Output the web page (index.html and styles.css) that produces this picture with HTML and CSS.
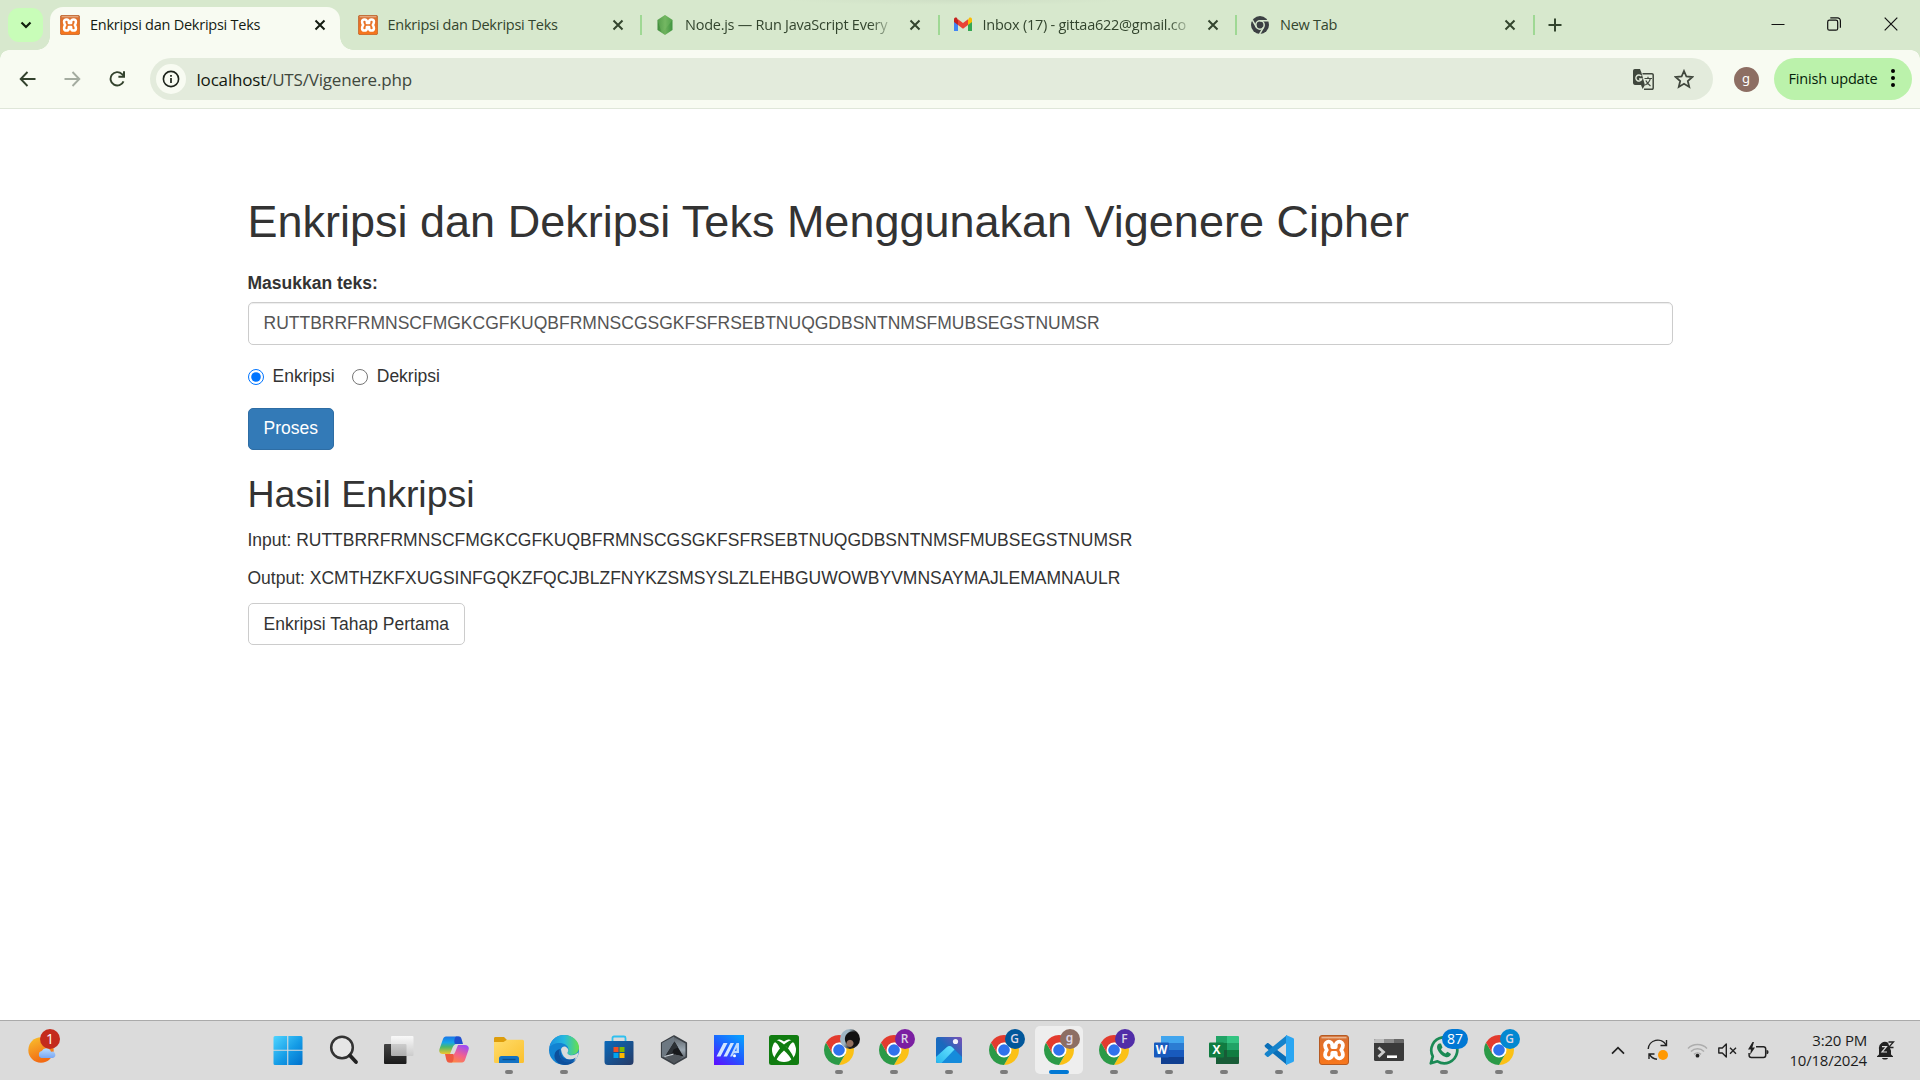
FILE: index.html
```html
<!DOCTYPE html>
<html lang="id">
<head>
<meta charset="utf-8">
<title>Enkripsi dan Dekripsi Teks</title>
<link rel="stylesheet" href="styles.css">
</head>
<body>
<svg class="defs" width="0" height="0" aria-hidden="true">
  <defs>
    <linearGradient id="gOrange" x1="0" y1="0" x2="0" y2="1"><stop offset="0" stop-color="#d0703a"/><stop offset=".25" stop-color="#e2702a"/><stop offset="1" stop-color="#f8771c"/></linearGradient>
    <linearGradient id="gWin" x1="0" y1="0" x2="1" y2="1"><stop offset="0" stop-color="#4fd5ff"/><stop offset=".55" stop-color="#149be6"/><stop offset="1" stop-color="#0070cc"/></linearGradient>
    <linearGradient id="gSun" x1="0" y1="0" x2=".4" y2="1"><stop offset="0" stop-color="#f9c22e"/><stop offset="1" stop-color="#f26a13"/></linearGradient>
    <linearGradient id="gCloud" x1="0" y1="0" x2="0" y2="1"><stop offset="0" stop-color="#b9dcff"/><stop offset="1" stop-color="#7aa7f3"/></linearGradient>
    <linearGradient id="gDark" x1="0" y1="0" x2="0" y2="1"><stop offset="0" stop-color="#444"/><stop offset="1" stop-color="#1b1b1b"/></linearGradient>
    <linearGradient id="gLight" x1="0" y1="0" x2="0" y2="1"><stop offset="0" stop-color="#fff"/><stop offset="1" stop-color="#c8c8c8"/></linearGradient>
    <linearGradient id="gCopA" x1="0" y1="0" x2="0" y2="1"><stop offset="0" stop-color="#1976e8"/><stop offset=".35" stop-color="#16a5e8"/><stop offset=".6" stop-color="#4cb86a"/><stop offset="1" stop-color="#f2c52e"/></linearGradient>
    <linearGradient id="gCopB" x1=".7" y1="0" x2=".2" y2="1"><stop offset="0" stop-color="#a04bf2"/><stop offset=".5" stop-color="#f2608f"/><stop offset="1" stop-color="#ff8a3c"/></linearGradient>
    <linearGradient id="gFolder" x1="0" y1="0" x2="1" y2="1"><stop offset="0" stop-color="#ffdc6b"/><stop offset="1" stop-color="#fbc02d"/></linearGradient>
    <linearGradient id="gEdge" x1="0" y1=".3" x2="1" y2=".3"><stop offset="0" stop-color="#1b8fe0"/><stop offset=".5" stop-color="#25b9df"/><stop offset="1" stop-color="#66e04c"/></linearGradient>
    <linearGradient id="gStore" x1="0" y1="0" x2="1" y2="1"><stop offset="0" stop-color="#0a6abb"/><stop offset="1" stop-color="#263a66"/></linearGradient>
    <linearGradient id="gHex" x1="0" y1="0" x2="0" y2="1"><stop offset="0" stop-color="#596067"/><stop offset=".5" stop-color="#9aa6b0"/><stop offset="1" stop-color="#3a3e43"/></linearGradient>
    <linearGradient id="gAsus" x1=".1" y1="1" x2=".8" y2="0"><stop offset="0" stop-color="#5b10ff"/><stop offset=".5" stop-color="#1f5bff"/><stop offset="1" stop-color="#0a9cff"/></linearGradient>
    <linearGradient id="gPhoto" x1="0" y1="1" x2="1" y2="0"><stop offset="0" stop-color="#0d72c9"/><stop offset=".5" stop-color="#1b69bd"/><stop offset="1" stop-color="#7b4fb5"/></linearGradient>
    <linearGradient id="gHill" x1="0" y1="1" x2="1" y2="0"><stop offset="0" stop-color="#26b6ee"/><stop offset="1" stop-color="#6be4ff"/></linearGradient>
    <linearGradient id="gNode" x1="0" y1="0" x2="1" y2="0"><stop offset="0" stop-color="#3f8b3c"/><stop offset=".5" stop-color="#6fb35e"/><stop offset="1" stop-color="#3f9440"/></linearGradient>

    <symbol id="xampp" viewBox="0 0 30 30">
      <rect x=".5" y=".5" width="29" height="29" rx="2.500" fill="url(#gOrange)" stroke="#b65a22"/>
      <path d="M2.500 2.600h25" stroke="#e8b48e" stroke-width="1.600"/>
      <path d="M13.300 12V10.300a3.600 3.600 0 0 0-7.200 0c0 2 .6 3.200 1.700 4.700-1.100 1.500-1.700 2.700-1.700 4.700a3.600 3.600 0 0 0 7.200 0V18h3.400v1.700a3.600 3.600 0 0 0 7.200 0c0-2-.6-3.200-1.700-4.700 1.100-1.500 1.700-2.700 1.700-4.700a3.600 3.600 0 0 0-7.200 0V12z" fill="none" stroke="#fff" stroke-width="3.800" stroke-linejoin="round"/>
    </symbol>
    <symbol id="chrome" viewBox="0 0 48 48">
      <path d="M34.390 30 24 48A24 24 0 0 0 44.780 12H24z" fill="#fbc116"/>
      <path d="M13.610 30 3.220 12A24 24 0 0 0 24 48l10.390-18z" fill="#2b9a47"/>
      <path d="M24 12h20.780A24 24 0 0 0 3.220 12l10.390 18z" fill="#e33b2e"/>
      <circle cx="24" cy="24" r="12" fill="#fff"/><circle cx="24" cy="24" r="9.300" fill="#2f72ec"/>
    </symbol>
    <symbol id="close" viewBox="0 0 12 12"><path d="M1.500 1.500l9 9M10.500 1.500l-9 9" stroke="currentColor" stroke-width="2" fill="none"/></symbol>
  </defs>
</svg>

<header class="browser">
  <div class="strip">
    <button class="tab-search"><svg width="12" height="8" viewBox="0 0 12 8"><path d="M1.500 1.500L6 6l4.500-4.500" fill="none" stroke="#10200d" stroke-width="2.200"/></svg></button>
    <div class="tab active"><svg class="fav"><use href="#xampp"/></svg><span class="title">Enkripsi dan Dekripsi Teks</span><svg class="x"><use href="#close"/></svg></div>
    <div class="tab"><svg class="fav"><use href="#xampp"/></svg><span class="title">Enkripsi dan Dekripsi Teks</span><svg class="x"><use href="#close"/></svg></div>
    <div class="tab sep"><svg class="fav" viewBox="0 0 20 20"><path d="M10 0l7.500 5v10L10 20l-7.500-5V5z" fill="url(#gNode)"/><path d="M10 0l7.500 5L7 18.300 2.500 5z" fill="#7fc06a" opacity=".35"/></svg><span class="title fade">Node.js — Run JavaScript Every</span><svg class="x"><use href="#close"/></svg></div>
    <div class="tab sep"><svg class="fav" viewBox="0 0 20 20"><path d="M1 4.500v11.400h4V8z" fill="#4285f4"/><path d="M19 4.500v11.400h-4V8z" fill="#34a853"/><path d="M15 5v5l4-3V4.500c0-2-2-2.300-3-1.500z" fill="#fbbc04"/><path d="M5 5v5L1 7V4.500c0-2 2-2.300 3-1.500z" fill="#c5221f"/><path d="M5 4.200l5 3.700 5-3.700V10l-5 3.700L5 10z" fill="#ea4335"/></svg><span class="title fade">Inbox (17) - gittaa622@gmail.co</span><svg class="x"><use href="#close"/></svg></div>
    <div class="tab sep"><svg class="fav" viewBox="0 0 20 20"><circle cx="10" cy="10" r="9" fill="#3c4043"/><circle cx="10" cy="10" r="4.200" fill="none" stroke="#d7e8cd" stroke-width="1.500"/><path d="M10 5.800h8M6.400 12.100l-4-7M13.600 12.100l-4 7" stroke="#d7e8cd" stroke-width="1.500"/></svg><span class="title">New Tab</span><svg class="x"><use href="#close"/></svg></div>
    <div class="plus"><svg width="14" height="14" viewBox="0 0 14 14"><path d="M7 .5v13M.5 7h13" stroke="#33452e" stroke-width="2"/></svg></div>
    <div class="window">
      <svg width="14" height="14" viewBox="0 0 14 14"><path d="M.5 7.500h13" stroke="#111" stroke-width="1"/></svg>
      <svg width="14" height="14" viewBox="0 0 14 14"><rect x=".7" y="3.200" width="10" height="10" rx="1.800" fill="none" stroke="#111" stroke-width="1.200"/><path d="M3.300 .9h7.200a2.900 2.900 0 0 1 2.900 2.900v7" fill="none" stroke="#111" stroke-width="1.200"/></svg>
      <svg width="14" height="14" viewBox="0 0 14 14"><path d="M.7.700l12.600 12.600M13.300.700L.7 13.300" stroke="#111" stroke-width="1.200"/></svg>
    </div>
  </div>
  <div class="toolbar">
    <div class="nav">
      <svg width="17" height="16" viewBox="0 0 17 16"><path d="M16.500 8H2M8.500 1L1.700 8l6.800 7" fill="none" stroke="#33422d" stroke-width="1.900"/></svg>
      <svg width="17" height="16" viewBox="0 0 17 16"><path d="M.5 8H15M8.500 1l6.800 7-6.800 7" fill="none" stroke="#a4aca0" stroke-width="1.900"/></svg>
      <svg width="17" height="16" viewBox="0 0 17 16"><path d="M14.500 10.300A6.700 6.700 0 1 1 13 3.100l2 2" fill="none" stroke="#33422d" stroke-width="1.900"/><path d="M16 .2v6.600H9.400V4.800H14V.2z" fill="#33422d"/></svg>
    </div>
    <div class="omnibox">
      <div class="info"><svg width="18" height="18" viewBox="0 0 18 18"><circle cx="9" cy="9" r="7.600" fill="none" stroke="#1d241b" stroke-width="1.600"/><path d="M9 8v5M9 5v1.700" stroke="#1d241b" stroke-width="1.700"/></svg></div>
      <span class="url"><b>localhost</b>/UTS/Vigenere.php</span>
      <svg class="translate" width="21" height="21" viewBox="0 0 21 21"><path d="M9.500 4.800H19a1.200 1.200 0 0 1 1.200 1.200v13a1.200 1.200 0 0 1-1.200 1.200h-8" fill="none" stroke="#40473d" stroke-width="1.500"/><path d="M1.800 0H7l1.400 3.600 3.500 12.300H1.800A1.800 1.800 0 0 1 0 14.100V1.800A1.800 1.800 0 0 1 1.800 0zM8 15.900h4L9.600 20z" fill="#40473d"/><path d="M8.300 7.200A3 3 0 1 0 8.700 10H6" fill="none" stroke="#e3ebdc" stroke-width="1.400"/><path d="M11.500 9.500h7.500M15 7.800v1.700M17.300 9.500c-.5 3-2.500 5-5 6.500M12.800 11.500c1 2 2.700 4 4.700 5.500" fill="none" stroke="#40473d" stroke-width="1.200"/></svg>
      <svg class="star" width="20" height="20" viewBox="0 0 20 20"><path d="M10 2l2.400 5.500 6 .5-4.600 4 1.400 5.900L10 14.800l-5.200 3.100L6.200 12 1.600 8l6-.5z" fill="none" stroke="#40473d" stroke-width="1.800"/></svg>
    </div>
    <div class="profile">g</div>
    <button class="update"><span>Finish update</span><svg width="4" height="18" viewBox="0 0 4 18"><circle cx="2" cy="2" r="2"/><circle cx="2" cy="9" r="2"/><circle cx="2" cy="16" r="2"/></svg></button>
  </div>
</header>

<main class="page">
  <h1>Enkripsi dan Dekripsi Teks Menggunakan Vigenere Cipher</h1>
  <label class="field-label" for="teks">Masukkan teks:</label>
  <input class="field" id="teks" type="text" value="RUTTBRRFRMNSCFMGKCGFKUQBFRMNSCGSGKFSFRSEBTNUQGDBSNTNMSFMUBSEGSTNUMSR">
  <div class="radios">
    <label><input type="radio" name="mode" checked>Enkripsi</label>
    <label><input type="radio" name="mode">Dekripsi</label>
  </div>
  <button class="btn primary">Proses</button>
  <h2>Hasil Enkripsi</h2>
  <p>Input: RUTTBRRFRMNSCFMGKCGFKUQBFRMNSCGSGKFSFRSEBTNUQGDBSNTNMSFMUBSEGSTNUMSR</p>
  <p>Output: XCMTHZKFXUGSINFGQKZFQCJBLZFNYKZSMSYSLZLEHBGUWOWBYVMNSAYMAJLEMAMNAULR</p>
  <button class="btn">Enkripsi Tahap Pertama</button>
</main>

<footer class="taskbar">
  <div class="widget">
    <svg width="30" height="30" viewBox="0 0 30 30"><circle cx="14" cy="15" r="12.700" fill="url(#gSun)"/><path d="M14.500 23a3.600 3.600 0 0 1 .3-7 5 5 0 0 1 9.200.7 3.300 3.300 0 0 1 2 6.300z" fill="url(#gCloud)"/></svg>
    <span class="badge red">1</span>
  </div>
  <div class="apps">
    <div class="app start"><svg viewBox="0 0 30 30"><path d="M.5 2.500a1.500 1.500 0 0 1 1.500-1.500h12.200v13.700H.5zM15.300 1H28a1.500 1.500 0 0 1 1.500 1.500v12.200H15.300zM.5 15.800h13.700V30H2a1.500 1.500 0 0 1-1.500-1.500zM15.300 15.800h14.200v12.700A1.500 1.500 0 0 1 28 30H15.300z" fill="url(#gWin)"/></svg></div>
    <div class="app"><svg viewBox="0 0 30 30"><circle cx="13" cy="12.500" r="10.800" fill="#e6e6e6" stroke="#333" stroke-width="2.500"/><path d="M21 20.500l6 6.500" stroke="#222" stroke-width="3.800" stroke-linecap="round"/></svg></div>
    <div class="app"><svg viewBox="0 0 30 30"><rect x="0" y="9" width="22.500" height="20" rx="1" fill="url(#gDark)"/><rect x="7" y="1" width="22.500" height="20" rx="1" fill="url(#gLight)" opacity=".83"/></svg></div>
    <div class="app"><svg viewBox="0 0 30 30"><path d="M7 1.500h12c2 0 3 1.500 2.500 3L20 9h-2c-3 0-4 2-5 5l-2 5H4c-3 0-4.500-2-3.500-5L4 4c.500-1.500 1.500-2.500 3-2.500z" fill="url(#gCopA)"/><path d="M17 1.500h3c2 0 2.500 2 3 4l1 3.500h-8c-1-1-1-6 1-7.500z" fill="#1f4fd0"/><path d="M23 27.500H11c-2 0-3-1.500-2.500-3l1.500-4.500h2c3 0 4-2 5-5l2-5h7c3 0 4.500 2 3.500 5L26 25c-.5 1.500-1.500 2.500-3 2.500z" fill="url(#gCopB)"/><path d="M13 27.500h-3c-2 0-2.500-2-3-4L6 19h8c1 1 1 7-1 8.500z" fill="#ee5a40"/></svg></div>
    <div class="app run"><svg viewBox="0 0 30 30"><path d="M0 6V3.500C0 2.500.5 2 1.500 2H10l3 3v3H0z" fill="#dd9d0c"/><path d="M0 7h9.500L13 4.800h15.500A1.500 1.500 0 0 1 30 6.300v20.200a1.500 1.500 0 0 1-1.500 1.500h-27A1.500 1.500 0 0 1 0 26.500z" fill="url(#gFolder)"/><path d="M5 28v-4.500A2.500 2.500 0 0 1 7.500 21h15a2.500 2.500 0 0 1 2.500 2.500V28z" fill="#1272c4"/><path d="M8.500 24.500h13" stroke="#0b4f8f" stroke-width="1.300"/></svg></div>
    <div class="app run"><svg viewBox="0 0 30 30"><circle cx="15" cy="15" r="15" fill="#1283d2"/><path d="M.5 12.500C1.500 5 7.500 0 15 0c8.500 0 15 6 15 12.500 0 5-4 7.500-8 7.500-3 0-4.500-1-4-2 1-1 1.500-2 1.500-3.500C19.500 10.500 15 8 10.500 8 6 8 2 10 .5 12.500z" fill="url(#gEdge)"/><path d="M11 14c-2 6 1 13 9 13 3 0 5-.7 7-2-3.500 4-8 5.500-13 4.800C8 28.800 5 24.500 5.500 20 5.800 17 8 14.500 11 14z" fill="#0c4f9c"/><path d="M12 14.500c.5-2.500 3-3.500 5-2.500s3 3 1.800 5c-1.300 1.700 1 3.500 4.200 3.200 2.500-.2 5-1.500 6.500-3-.5 3.500-1.500 6-3 7-3 2-13 1.500-14.500-9.700z" fill="#dbdbdb"/><path d="M12 14c-1.500 6 2.500 10.500 8 10.500 3 0 5.500-1 6.800-2-2 5-8 6-11.800 4-4-2-5.500-8-3-12.500z" fill="#0f58a8"/></svg></div>
    <div class="app"><svg viewBox="0 0 30 30"><path d="M8.500 7V3A1.500 1.500 0 0 1 10 1.500h10A1.500 1.500 0 0 1 21.500 3v4" fill="none" stroke="#2fc0ef" stroke-width="1.800"/><path d="M.5 7a1 1 0 0 1 1-1h27a1 1 0 0 1 1 1v19.500a3.500 3.500 0 0 1-3.500 3.500H4A3.500 3.500 0 0 1 .5 26.500z" fill="url(#gStore)"/><path d="M9.500 12h5v5h-5z" fill="#f25022"/><path d="M15.500 12h5v5h-5z" fill="#7fba00"/><path d="M9.500 18h5v5h-5z" fill="#00a4ef"/><path d="M15.500 18h5v5h-5z" fill="#ffb900"/></svg></div>
    <div class="app"><svg viewBox="0 0 30 30"><path d="M15 1l12.300 7v14L15 29 2.700 22V8z" fill="url(#gHex)" stroke="#3b4046" stroke-width="1.600" stroke-linejoin="round"/><path d="M15 1.500V7L6.500 21.500 3 22V8z" fill="#6d7882"/><path d="M15.500 6.500l9 15-8.500-1.800-10 2z" fill="#17191c"/><path d="M15.500 6.500l3.500 6-4.500 2-1.500 4-7 3z" fill="#2c3136"/><path d="M6 21.500l10-2 8 2L15 28.500z" fill="#50565c"/><path d="M5.500 21.500l9-2.300" stroke="#ccd3d9" stroke-width="1.200"/></svg></div>
    <div class="app"><svg viewBox="0 0 30 30"><path d="M0 0h30v30H0z" fill="url(#gAsus)"/><path d="M2.500 21.500L9.500 8h4l-7 13.500zM9.500 21.500l7-13.500h3.500l-7 13.500z" fill="#d2e6ff"/><path d="M16 21.500L22.500 8H25v10h-2.500v-5.500l-1.600 3.500h1.600v2.200h-2.700l-1.500 3.300z" fill="#bcd9ff"/><circle cx="20.500" cy="20.700" r="1.500" fill="#fff"/></svg></div>
    <div class="app"><svg viewBox="0 0 30 30"><rect width="30" height="30" rx="2.500" fill="#107c10"/><circle cx="15" cy="15" r="12" fill="#fff"/><path d="M7 4.500c3-1 6 .5 8 2 2-1.500 5-3 8-2-2-2-5-2.800-8-2.800S9 2.500 7 4.500zM4.500 25.500c1-5 5.500-12 10.500-16 5 4 9.500 11 10.500 16l-2 1.500c-1.500-4.500-5-8.500-8.500-11.500-3.500 3-7 7-8.500 11.500zM7 5c3.500.5 6 3 8 4.500-2 2-3 3-4 4C9.500 10.500 8 7.500 5 7zM23 5c-3.500.5-6 3-8 4.500 2 2 3 3 4 4 1.500-3 3-6 6-6.500z" fill="#107c10"/></svg></div>
    <div class="app run"><svg><use href="#chrome"/></svg><span class="badge astro"></span></div>
    <div class="app run"><svg><use href="#chrome"/></svg><span class="badge purple">R</span></div>
    <div class="app run"><svg viewBox="0 0 30 30"><rect x="2" y="2" width="26" height="26" rx="1.800" fill="url(#gPhoto)"/><path d="M2 22L13 12c1.500-1.300 3.500-1.300 5 0l10 10v4a2 2 0 0 1-2 2H4a2 2 0 0 1-2-2z" fill="#158bdb"/><path d="M2 22L13 12c1.500-1.300 3.500-1.300 5 0l2.500 2.500L7.500 28H4a2 2 0 0 1-2-2z" fill="url(#gHill)"/><circle cx="21.500" cy="6.500" r="2.600" fill="#f2f2fa"/></svg></div>
    <div class="app run"><svg><use href="#chrome"/></svg><span class="badge navy">G</span></div>
    <div class="app run current"><svg><use href="#chrome"/></svg><span class="badge brown">g</span></div>
    <div class="app run"><svg><use href="#chrome"/></svg><span class="badge violet">F</span></div>
    <div class="app run"><svg viewBox="0 0 30 30"><path d="M7 1h22a1 1 0 0 1 1 1v6H7z" fill="#41a5ee"/><path d="M7 8h23v7H7z" fill="#2b7cd3"/><path d="M7 15h23v7H7z" fill="#185abd"/><path d="M7 22h23v6a1 1 0 0 1-1 1H7z" fill="#103f91"/><rect y="7.500" width="15" height="15" rx="1" fill="#185abd"/><text x="7.500" y="19" text-anchor="middle" class="glyph">W</text></svg></div>
    <div class="app run"><svg viewBox="0 0 30 30"><path d="M7 1h11v7H7z" fill="#21a366"/><path d="M18 1h11a1 1 0 0 1 1 1v6H18z" fill="#33c481"/><path d="M7 8h11v7H7z" fill="#107c41"/><path d="M18 8h12v7H18z" fill="#21a366"/><path d="M7 15h11v7H7z" fill="#185c37"/><path d="M18 15h12v7H18z" fill="#107c41"/><path d="M7 22h23v6a1 1 0 0 1-1 1H7z" fill="#185c37"/><rect y="7.500" width="15" height="15" rx="1" fill="#107c41"/><text x="7.500" y="19" text-anchor="middle" class="glyph">X</text></svg></div>
    <div class="app run"><svg viewBox="0 0 30 30"><path d="M.5 10.500L3 8.300c.5-.4 1-.4 1.500 0L23 22.500V30L1 11.900z" fill="#0a6fb8"/><path d="M.5 19.500L3 21.700c.5.400 1 .4 1.500 0L23 7.500V0L1 18.100z" fill="#1583cb"/><path d="M22 0l7 3c.7.300 1 .8 1 1.500v21c0 .7-.3 1.200-1 1.500l-7 3z" fill="#2aa6f2"/></svg></div>
    <div class="app run"><svg><use href="#xampp"/></svg></div>
    <div class="app run"><svg viewBox="0 0 30 30"><rect y="4" width="30" height="22" rx="1.500" fill="#3a3a3a"/><path d="M1.500 4H10v4H0V5.500A1.500 1.500 0 0 1 1.500 4z" fill="#bdbdbd"/><path d="M10 4h10v4H10z" fill="#8d8d8d"/><path d="M20 4h8.500A1.500 1.500 0 0 1 30 5.500V8H20z" fill="#666"/><path d="M4.500 12.500L9.500 17l-5 4.700" fill="none" stroke="#ccc" stroke-width="2.800"/><path d="M13 21.700h10" stroke="#fff" stroke-width="2.600"/></svg></div>
    <div class="app run"><svg viewBox="0 0 30 30"><path d="M1.800 28.300l2-7A13 13 0 1 1 8.500 26.300z" fill="#e0e0e0" stroke="#1b8a55" stroke-width="2.700" stroke-linejoin="round"/><path d="M10 8.500c-2 1-2.500 3.500-1.500 6 1.500 3.500 4.500 6.500 8 7.500 2.500.7 5-.5 5.500-3l-3.500-2.200-2 1.700c-2-.8-3.500-2.300-4.500-4.300l1.500-1.700L12 8.500z" fill="#1b8a55"/></svg><span class="badge count">87</span></div>
    <div class="app run"><svg><use href="#chrome"/></svg><span class="badge sky">G</span></div>
  </div>
  <div class="tray">
    <svg class="chev" width="14" height="9" viewBox="0 0 14 9"><path d="M1 7.700L7 1.700l6 6" fill="none" stroke="#222" stroke-width="1.700"/></svg>
    <svg class="sync" width="22" height="22" viewBox="0 0 22 22"><path d="M1.200 10A9.500 9.500 0 0 1 19 6M19.500 1v5.500h-6M10 20.300a9.500 9.500 0 0 1-7.500-5.200M2 20v-5h5.500" fill="none" stroke="#222" stroke-width="1.400"/><circle cx="16" cy="16" r="5" fill="#ff9800"/></svg>
    <svg class="wifi" width="21" height="16" viewBox="0 0 21 16"><path d="M1 6.500a13.500 13.500 0 0 1 19 0M4 9.500a9.200 9.200 0 0 1 13 0M7 12.400a5 5 0 0 1 7 0" fill="none" stroke="#adadad" stroke-width="1.500"/><circle cx="10.500" cy="13.700" r="1.900" fill="#222"/></svg>
    <svg class="mute" width="19" height="15" viewBox="0 0 19 15"><path d="M.8 5v5h3.500L8.300 14V1L4.300 5z" fill="none" stroke="#222" stroke-width="1.400" stroke-linejoin="round"/><path d="M12 4.700l6 6M18 4.700l-6 6" stroke="#222" stroke-width="1.400"/></svg>
    <svg class="batt" width="21" height="17" viewBox="0 0 21 17"><path d="M8 4.700h7.500A2.200 2.200 0 0 1 17.700 7v6.300a2.200 2.200 0 0 1-2.200 2.200H3.300A2.200 2.200 0 0 1 1.100 13.300V11" fill="none" stroke="#222" stroke-width="1.500"/><path d="M18.500 8c1.700 0 2 .7 2 2s-.3 2.200-2 2.200zM4.500 0L0 7.500h3L2 13l5-7.500H4.300L6 0z" fill="#222"/></svg>
    <div class="clock"><span>3:20 PM</span><span>10/18/2024</span></div>
    <svg class="bell" width="18" height="19" viewBox="0 0 18 19"><path d="M2 13.500V8a6 6 0 0 1 9-6.200l3 8V13.500l2 1.700v.8H0v-.8zM5 17h6c-.5 2-5.500 2-6 0z" fill="#222"/><path d="M5 5.700h4.500L5 11h5" fill="none" stroke="#dbdbdb" stroke-width="1.200"/><path d="M11.500 1h5l-5 5.500h5" fill="none" stroke="#222" stroke-width="1.300"/></svg>
  </div>
</footer>
</body>
</html>
```
FILE: styles.css
```css
* { box-sizing: border-box; }
body {
  margin: 0;
  width: 1920px;
  height: 1080px;
  overflow: hidden;
  display: flex;
  flex-direction: column;
  background: #fff;
  color: #333;
  font: 17.5px/25px "Liberation Sans", Arial, sans-serif;
}
button { font: inherit; border: 0; padding: 0; }
svg { display: block; flex: none; }
.defs { position: absolute; }

/* Browser chrome */
.browser, .taskbar { font-family: "Open Sans", "Noto Sans", sans-serif; }
.strip {
  height: 50px;
  display: flex;
  align-items: flex-start;
  padding-left: 8px;
  background: radial-gradient(ellipse 170px 5px at 958px 0, #cfdfc6, transparent) #d7e8cd;
}
.tab-search {
  width: 35px;
  height: 34px;
  margin: 8px 7px 0 0;
  border-radius: 11px;
  background: #c8fdb8;
  display: grid;
  place-items: center;
}
.tab {
  position: relative;
  width: 290px;
  height: 43px;
  margin: 7px 7.5px 0 0;
  padding: 0 14px 7px 10px;
  display: flex;
  align-items: center;
  color: #33452e;
}
.tab.active { background: #f8fbf2; border-radius: 13px 13px 0 0; color: #141c12; }
.tab.active::before, .tab.active::after {
  content: "";
  position: absolute;
  bottom: 0;
  width: 13px;
  height: 13px;
}
.tab.active::before { left: -13px; background: radial-gradient(circle at 0 0, transparent 12.5px, #f8fbf2 13px); }
.tab.active::after { right: -13px; background: radial-gradient(circle at 100% 0, transparent 12.5px, #f8fbf2 13px); }
.tab.sep::before, .plus::before {
  content: "";
  position: absolute;
  left: -5px;
  top: 8px;
  width: 2px;
  height: 20px;
  background: #9fd894;
}
.fav { width: 20px; height: 20px; margin-right: 10px; }
.title {
  flex: 1;
  height: 22px;
  font-size: 14.5px;
  line-height: 22px;
  letter-spacing: -0.25px;
  white-space: nowrap;
}
.title.fade {
  -webkit-mask-image: linear-gradient(90deg, #000 185px, transparent 211px);
  mask-image: linear-gradient(90deg, #000 185px, transparent 211px);
}
.x { width: 12px; height: 12px; }
.plus { position: relative; margin: 7px 0 0; padding: 11px 0 0 10.5px; }
.window { display: flex; gap: 42.5px; margin: 17px 22.5px 0 auto; }

.toolbar {
  height: 59px;
  display: flex;
  align-items: center;
  padding: 0 8px 0 18.5px;
  background: #f8fbf2;
  border-bottom: 1px solid #dfe6d9;
  position: relative;
}
.toolbar::before {
  content: "";
  position: absolute;
  right: 0;
  top: 0;
  width: 9px;
  height: 9px;
  background: radial-gradient(circle at 0 100%, transparent 8.5px, #d7e8cd 9px);
}
.toolbar::after {
  content: "";
  position: absolute;
  left: 0;
  top: 0;
  width: 9px;
  height: 9px;
  background: radial-gradient(circle at 100% 100%, transparent 8.5px, #d7e8cd 9px);
}
.nav { display: flex; gap: 28px; width: 131.5px; }
.omnibox {
  width: 1563px;
  height: 42px;
  display: flex;
  align-items: center;
  padding: 0 19px 0 6px;
  border-radius: 21px;
  background: #e3ebdc;
}
.info {
  width: 30px;
  height: 30px;
  border-radius: 50%;
  background: #f8fbf2;
  display: grid;
  place-items: center;
}
.url { margin-left: 10.5px; font-size: 17px; letter-spacing: -0.18px; color: #40473d; }
.url b { font-weight: 400; color: #12180f; }
.translate { margin-left: auto; }
.star { margin-left: 20px; }
.profile {
  width: 25px;
  height: 25px;
  margin: 0 15px 0 20.5px;
  border-radius: 50%;
  background: #8d6e63;
  color: #fff;
  font: 13px/23px "Noto Sans", sans-serif;
  text-align: center;
}
.update {
  width: 138px;
  height: 42px;
  display: flex;
  align-items: center;
  justify-content: space-between;
  padding: 0 17px 2px 15px;
  border-radius: 21px;
  background: #bbf2ab;
  color: #05220a;
  font-size: 14.5px;
  letter-spacing: -0.18px;
}

/* Page */
.page { flex: 1; padding: 87.5px 247.5px 0; }
h1, h2, p { margin: 0; }
h1 { font-size: 45px; line-height: 49.5px; font-weight: 500; }
h2 { font-size: 37.5px; line-height: 41.25px; font-weight: 500; margin: 24.5px 0 12.5px; }
p { margin-bottom: 12.5px; }
.field-label { display: block; margin: 24.5px 0 6.25px; font-weight: 700; }
.field {
  display: block;
  width: 100%;
  height: 43px;
  padding: 7.5px 15px;
  border: 1px solid #ccc;
  border-radius: 5px;
  box-shadow: inset 0 1px 1px rgba(0, 0, 0, .075);
  color: #555;
  font: inherit;
}
.radios { display: flex; gap: 17px; margin: 19px 0 19px; }
.radios label { display: flex; align-items: center; }
.radios input { width: 16px; height: 16px; margin: 1px 9px 0 0; }
.btn {
  display: block;
  height: 42px;
  padding: 0 15px;
  border: 1px solid #ccc;
  border-radius: 5px;
  background: #fff;
  color: #333;
}
.btn.primary { background: #337ab7; border-color: #2e6da4; color: #fff; }

/* Taskbar */
.taskbar {
  height: 60px;
  display: flex;
  background: #dbdbdb;
  border-top: 1px solid #aaa;
  color: #1c1c1c;
}
.widget { position: relative; width: 261px; padding: 14px 0 0 27px; }
.apps { display: flex; }
.app { position: relative; width: 55px; padding: 14px 12.5px 0; }
.app.start { padding-left: 11.5px; }
.app > svg { position: relative; width: 30px; height: 30px; }
.app.run::after {
  content: "";
  position: absolute;
  left: 24px;
  top: 49px;
  width: 8px;
  height: 4px;
  border-radius: 2px;
  background: #7c7c7c;
}
.app.current::before {
  content: "";
  position: absolute;
  left: 3.5px;
  top: 5px;
  width: 48px;
  height: 48px;
  border-radius: 5px;
  background: #eee;
}
.app.current::after { left: 18px; width: 20px; background: #0078d4; }
.badge {
  position: absolute;
  left: 28.5px;
  top: 8px;
  width: 20px;
  height: 20px;
  border-radius: 10px;
  color: #dcd6e6;
  font-size: 12px;
  font-weight: 600;
  line-height: 20px;
  text-align: center;
}
.red { left: 40px; background: #c42b1c; color: #fff; font-size: 14px; font-weight: 400; }
.purple { background: #7b1fa2; }
.navy { background: #01579b; }
.brown { background: #8d6e63; font-family: "Noto Sans", sans-serif; line-height: 18px; }
.violet { background: #512da8; }
.sky { background: #0288d1; }
.count { width: 26px; left: 26px; background: #0078d4; color: #fff; font-size: 14px; font-weight: 400; }
.astro { background: radial-gradient(circle at 50% 72%, #92705f 0 3px, transparent 4px), radial-gradient(circle at 62% 50%, #111 0 7px, transparent 8px), linear-gradient(110deg, #9fb6c4 35%, #222 60%); }
.glyph { font: 700 12px "Open Sans", sans-serif; fill: #fff; }

.tray { display: flex; align-items: center; margin-left: auto; padding: 0 25px 1px 0; }
.sync { margin-left: 22px; }
.wifi { margin-left: 18px; }
.mute { margin-left: 10px; }
.batt { margin-left: 11px; }
.clock { width: 98px; display: flex; flex-direction: column; align-items: flex-end; font-size: 15px; line-height: 20px; letter-spacing: -0.2px; white-space: nowrap; }
.bell { margin-left: 10px; }
```
